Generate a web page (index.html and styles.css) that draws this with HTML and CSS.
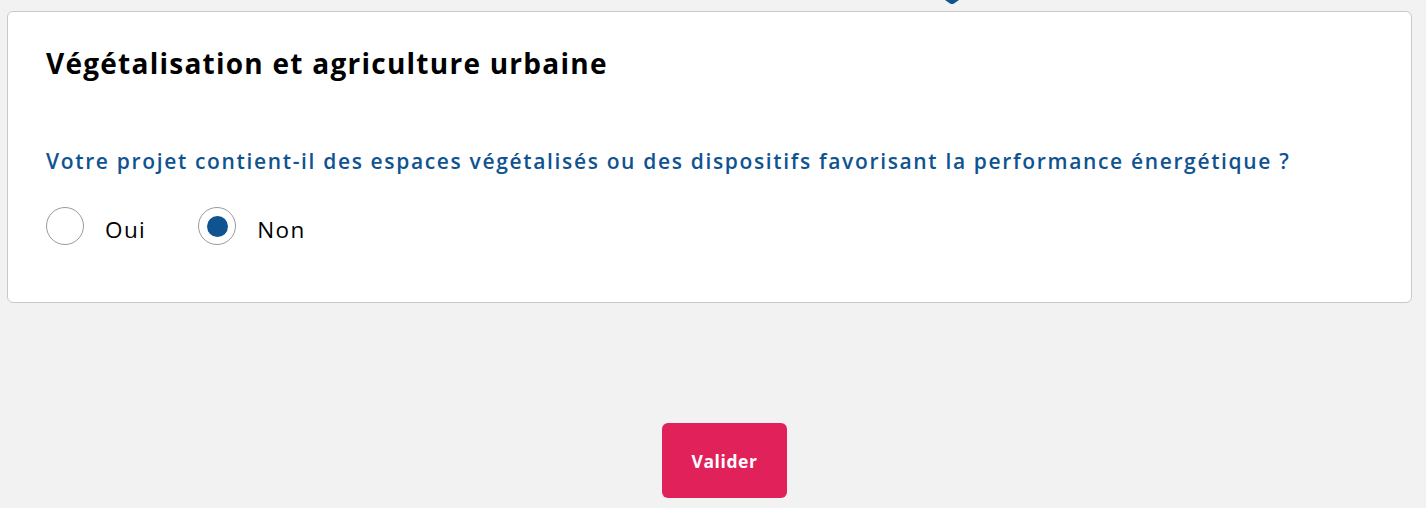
FILE: index.html
```html
<!DOCTYPE html>
<html lang="fr">
<head>
  <meta charset="UTF-8" />
  <meta name="viewport" content="width=device-width, initial-scale=1.0"/>
  <title>Végétalisation</title>
  <link rel="stylesheet" href="styles.css">
</head>
<body>
  <div class="top">
    <svg class="top-tip" width="14" height="4" viewBox="0 0 14 4"><path d="M0 0 L14 0 L9 3.5 Q7 4.5 5 3.5 Z" fill="#0f5391"/></svg>
  </div>

  <div class="card">
    <h2>Végétalisation et agriculture urbaine</h2>
    <p class="question">Votre projet contient-il des espaces végétalisés ou des dispositifs favorisant la performance énergétique ?</p>
    <div class="choices">
      <label class="choice">
        <input type="radio" name="vegetal" value="oui" />
        <span class="dot"></span>
        <span class="label">Oui</span>
      </label>
      <label class="choice">
        <input type="radio" name="vegetal" value="non" checked />
        <span class="dot"></span>
        <span class="label">Non</span>
      </label>
    </div>
  </div>

  <div class="actions">
    <button type="submit">Valider</button>
  </div>
</body>
</html>
```

FILE: styles.css
```css
* {
  margin: 0;
  padding: 0;
  box-sizing: border-box;
  font-family: "Open Sans", Arial, sans-serif;
}

body, html {
  width: 100%;
  height: 100%;
}

body {
  background: #f2f2f2;
  padding: 0 14px 0 7px;
}

.top {
  height: 11px;
  display: flex;
}

.top-tip {
  margin-left: 938px;
}

.card {
  background: #fff;
  border: 1px solid #c9c9c9;
  border-radius: 6px;
  padding: 35px 38px 30px;
  height: 292px;
}

.card h2 {
  font-size: 28px;
  font-weight: 700;
  color: #000;
  line-height: 32px;
  letter-spacing: 1.25px;
}

.question {
  margin-top: 68px;
  font-size: 21px;
  font-weight: 600;
  color: #0f5391;
  line-height: 28px;
  letter-spacing: 1.65px;
}

.choices {
  display: flex;
  gap: 52px;
  margin-top: 32px;
}

.choice {
  display: flex;
  align-items: center;
  cursor: pointer;
}

.choice input {
  display: none;
}

.dot {
  width: 38px;
  height: 38px;
  border: 1px solid #9a9a9a;
  border-radius: 50%;
  display: flex;
  justify-content: center;
  align-items: center;
  background: #fff;
}

.choice input:checked + .dot::after {
  content: "";
  width: 21px;
  height: 21px;
  border-radius: 50%;
  background: #0f5391;
}

.label {
  margin-left: 21px;
  margin-top: 6px;
  font-size: 22.5px;
  letter-spacing: 1.4px;
  color: #000;
}

.actions {
  display: flex;
  justify-content: center;
  margin-top: 120px;
  padding-left: 30px;
}

button {
  width: 125px;
  height: 75px;
  background: #e0215a;
  color: #fff;
  border: none;
  border-radius: 6px;
  font-size: 17.5px;
  font-weight: 700;
  letter-spacing: 0.6px;
  cursor: pointer;
}
```
